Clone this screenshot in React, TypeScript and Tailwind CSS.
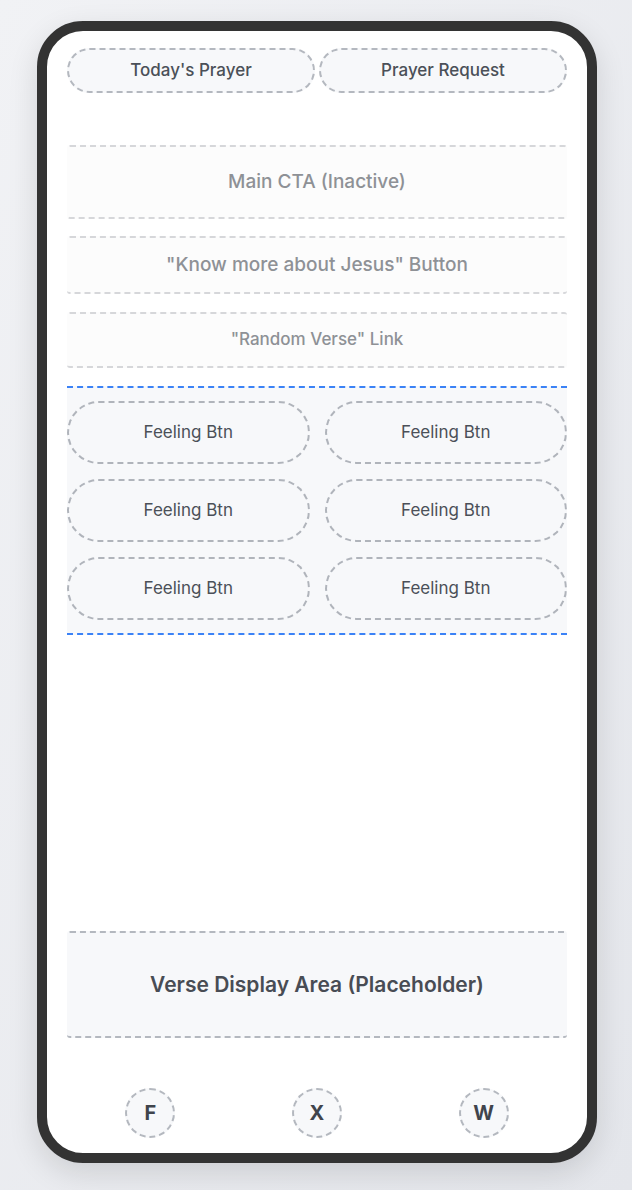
export default function App() {
  const feelings = [1, 2, 3, 4, 5, 6];
  return (
    <div
      className="w-full min-h-screen flex justify-center pt-[21px] pl-[2px] bg-gradient-to-br from-[#f1f2f5] to-[#e4e6eb]"
      style={{ fontFamily: "Inter, 'Noto Sans', sans-serif" }}
    >
      <div className="w-[560px] h-[1142px] rounded-[46px] border-[10px] border-[#333333] bg-white shadow-[0_10px_30px_rgba(0,0,0,0.12)] flex flex-col px-[20px] pt-[17px] pb-[15px]">
        <div className="flex justify-between">
          <button className="w-[248px] h-[45px] rounded-full border-2 border-dashed border-[#b4b8bf] bg-[#f7f8fa] text-[17px] font-medium text-[#4b5058]">
            Today's Prayer
          </button>
          <button className="w-[248px] h-[45px] rounded-full border-2 border-dashed border-[#b4b8bf] bg-[#f7f8fa] text-[17px] font-medium text-[#4b5058]">
            Prayer Request
          </button>
        </div>

        <div className="mt-[52px] h-[74px] flex items-center justify-center rounded-[3px] border-y-2 border-dashed border-[#d6d7da] bg-[#fcfcfc] text-[19px] font-medium text-[#8e9196]">
          Main CTA (Inactive)
        </div>
        <div className="mt-[17px] h-[58px] flex items-center justify-center rounded-[3px] border-y-2 border-dashed border-[#d6d7da] bg-[#fcfcfc] text-[19px] font-medium text-[#8e9196]">
          "Know more about Jesus" Button
        </div>
        <div className="mt-[18px] h-[56px] flex items-center justify-center rounded-[3px] border-y-2 border-dashed border-[#d6d7da] bg-[#fcfcfc] text-[17px] font-medium text-[#8e9196]">
          "Random Verse" Link
        </div>

        <div className="mt-[18px] border-y-2 border-dashed border-[#3b82f6] bg-[#f7f8fa] py-[13px] grid grid-cols-2 gap-x-[15px] gap-y-[15px]">
          {feelings.map((f) => (
            <button
              key={f}
              className="h-[63px] rounded-full border-2 border-dashed border-[#b0b4bb] bg-[#f7f8fa] text-[17px] text-[#4b5058]"
            >
              Feeling Btn
            </button>
          ))}
        </div>

        <div className="mt-auto h-[107px] flex items-center justify-center rounded-[3px] border-y-2 border-dashed border-[#b4b8bf] bg-[#f7f8fa] text-[21px] font-semibold text-[#484c54]">
          Verse Display Area (Placeholder)
        </div>

        <div className="mt-[50px] grid grid-cols-3">
          {["F", "X", "W"].map((s) => (
            <div key={s} className="flex justify-center">
              <div className="w-[50px] h-[50px] rounded-full border-2 border-dashed border-[#b4b8bf] bg-[#f7f8fa] flex items-center justify-center text-[20px] font-bold text-[#40444c]">
                {s}
              </div>
            </div>
          ))}
        </div>
      </div>
    </div>
  );
}
